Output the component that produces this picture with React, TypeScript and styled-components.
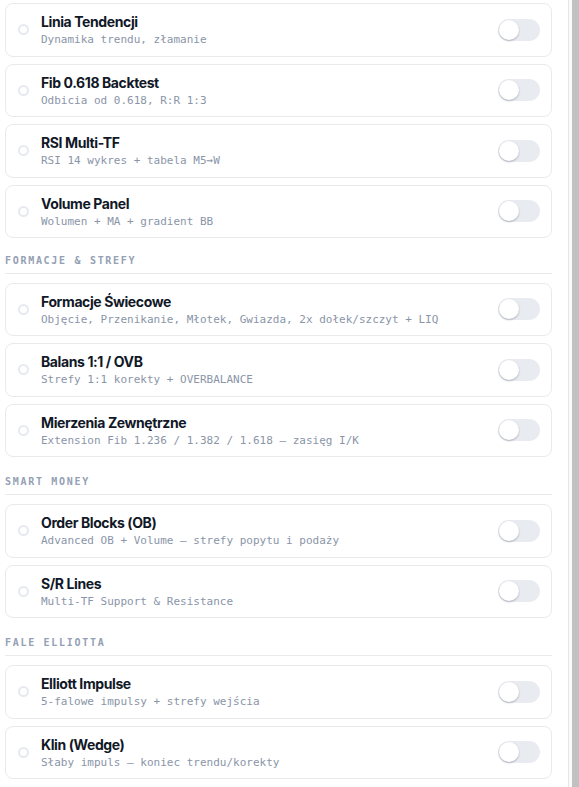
import React from "react";
import styled, { createGlobalStyle } from "styled-components";

const Global = createGlobalStyle`
  html, body { margin: 0; padding: 0; background: #ffffff; }
  body { font-family: Inter, "Noto Sans", sans-serif; -webkit-font-smoothing: antialiased; }
`;

const Frame = styled.div`
  display: flex;
  width: 579px;
  height: 787px;
  overflow: hidden;
  background: #ffffff;
`;

const Content = styled.div`
  flex: 0 0 568px;
  box-sizing: border-box;
  padding: 3px 16px 0 5px;
  display: flex;
  flex-direction: column;
`;

const Scrollbar = styled.div`
  flex: 0 0 11px;
  box-sizing: border-box;
  border-left: 1px solid #e6e6e6;
  background: #fafafa;
  display: flex;
  justify-content: flex-end;
`;

const Thumb = styled.div`
  width: 7px;
  height: 100%;
  background: #c1c1c1;
`;

const Section = styled.section`
  display: flex;
  flex-direction: column;
  gap: 7px;
`;

const SectionTitle = styled.div<{ $first?: boolean }>`
  margin-top: ${(p) => (p.$first ? "15.5px" : "18px")};
  margin-bottom: 2px;
  padding: 0 0 5px 0;
  border-bottom: 1px solid #e8eaee;
  font-family: "DejaVu Sans Mono", "Liberation Mono", monospace;
  font-size: 10px;
  line-height: 14px;
  font-weight: 700;
  letter-spacing: 1.7px;
  color: #94a0b4;
  text-transform: uppercase;
`;

const Card = styled.div`
  box-sizing: border-box;
  height: 53.5px;
  border: 1px solid #e8eaee;
  border-radius: 8px;
  background: #ffffff;
  display: flex;
  align-items: center;
  padding: 0 11px 0 12px;
`;

const Radio = styled.span`
  box-sizing: border-box;
  flex: 0 0 11px;
  width: 11px;
  height: 11px;
  border-radius: 50%;
  border: 2px solid #e6e9ef;
  margin-right: 12px;
`;

const Texts = styled.div`
  flex: 1;
  min-width: 0;
  display: flex;
  flex-direction: column;
  gap: 1px;
  padding-top: 1px;
`;

const Title = styled.div`
  font-family: Inter, "Noto Sans", sans-serif;
  font-size: 14px;
  line-height: 18px;
  font-weight: 700;
  letter-spacing: -0.4px;
  color: #111827;
  white-space: nowrap;
`;

const Sub = styled.div`
  font-family: "DejaVu Sans Mono", "Liberation Mono", monospace;
  font-size: 11px;
  line-height: 15px;
  color: #8a95a8;
  white-space: nowrap;
`;

const Toggle = styled.span<{ $on?: boolean }>`
  position: relative;
  flex: 0 0 42px;
  width: 42px;
  height: 22px;
  border-radius: 11px;
  background: ${(p) => (p.$on ? "#3b82f6" : "#e8ebf0")};
  &::after {
    content: "";
    position: absolute;
    top: 1px;
    left: ${(p) => (p.$on ? "21px" : "1px")};
    width: 20px;
    height: 20px;
    border-radius: 50%;
    background: #ffffff;
    box-shadow: 0 1px 2px rgba(15, 23, 42, 0.28);
  }
`;

type Item = { title: string; sub: string };
type Group = { name?: string; items: Item[] };

const groups: Group[] = [
  {
    items: [
      { title: "Linia Tendencji", sub: "Dynamika trendu, złamanie" },
      { title: "Fib 0.618 Backtest", sub: "Odbicia od 0.618, R:R 1:3" },
      { title: "RSI Multi-TF", sub: "RSI 14 wykres + tabela M5→W" },
      { title: "Volume Panel", sub: "Wolumen + MA + gradient BB" },
    ],
  },
  {
    name: "Formacje & Strefy",
    items: [
      {
        title: "Formacje Świecowe",
        sub: "Objęcie, Przenikanie, Młotek, Gwiazda, 2x dołek/szczyt + LIQ",
      },
      { title: "Balans 1:1 / OVB", sub: "Strefy 1:1 korekty + OVERBALANCE" },
      {
        title: "Mierzenia Zewnętrzne",
        sub: "Extension Fib 1.236 / 1.382 / 1.618 — zasięg I/K",
      },
    ],
  },
  {
    name: "Smart Money",
    items: [
      {
        title: "Order Blocks (OB)",
        sub: "Advanced OB + Volume — strefy popytu i podaży",
      },
      { title: "S/R Lines", sub: "Multi-TF Support & Resistance" },
    ],
  },
  {
    name: "Fale Elliotta",
    items: [
      { title: "Elliott Impulse", sub: "5-falowe impulsy + strefy wejścia" },
      { title: "Klin (Wedge)", sub: "Słaby impuls — koniec trendu/korekty" },
    ],
  },
];

export default function App() {
  return (
    <>
      <Global />
      <Frame>
        <Content>
          {groups.map((g, gi) => (
            <Section key={gi}>
              {g.name && <SectionTitle $first={gi === 1}>{g.name}</SectionTitle>}
              {g.items.map((it) => (
                <Card key={it.title}>
                  <Radio />
                  <Texts>
                    <Title>{it.title}</Title>
                    <Sub>{it.sub}</Sub>
                  </Texts>
                  <Toggle />
                </Card>
              ))}
            </Section>
          ))}
        </Content>
        <Scrollbar>
          <Thumb />
        </Scrollbar>
      </Frame>
    </>
  );
}
